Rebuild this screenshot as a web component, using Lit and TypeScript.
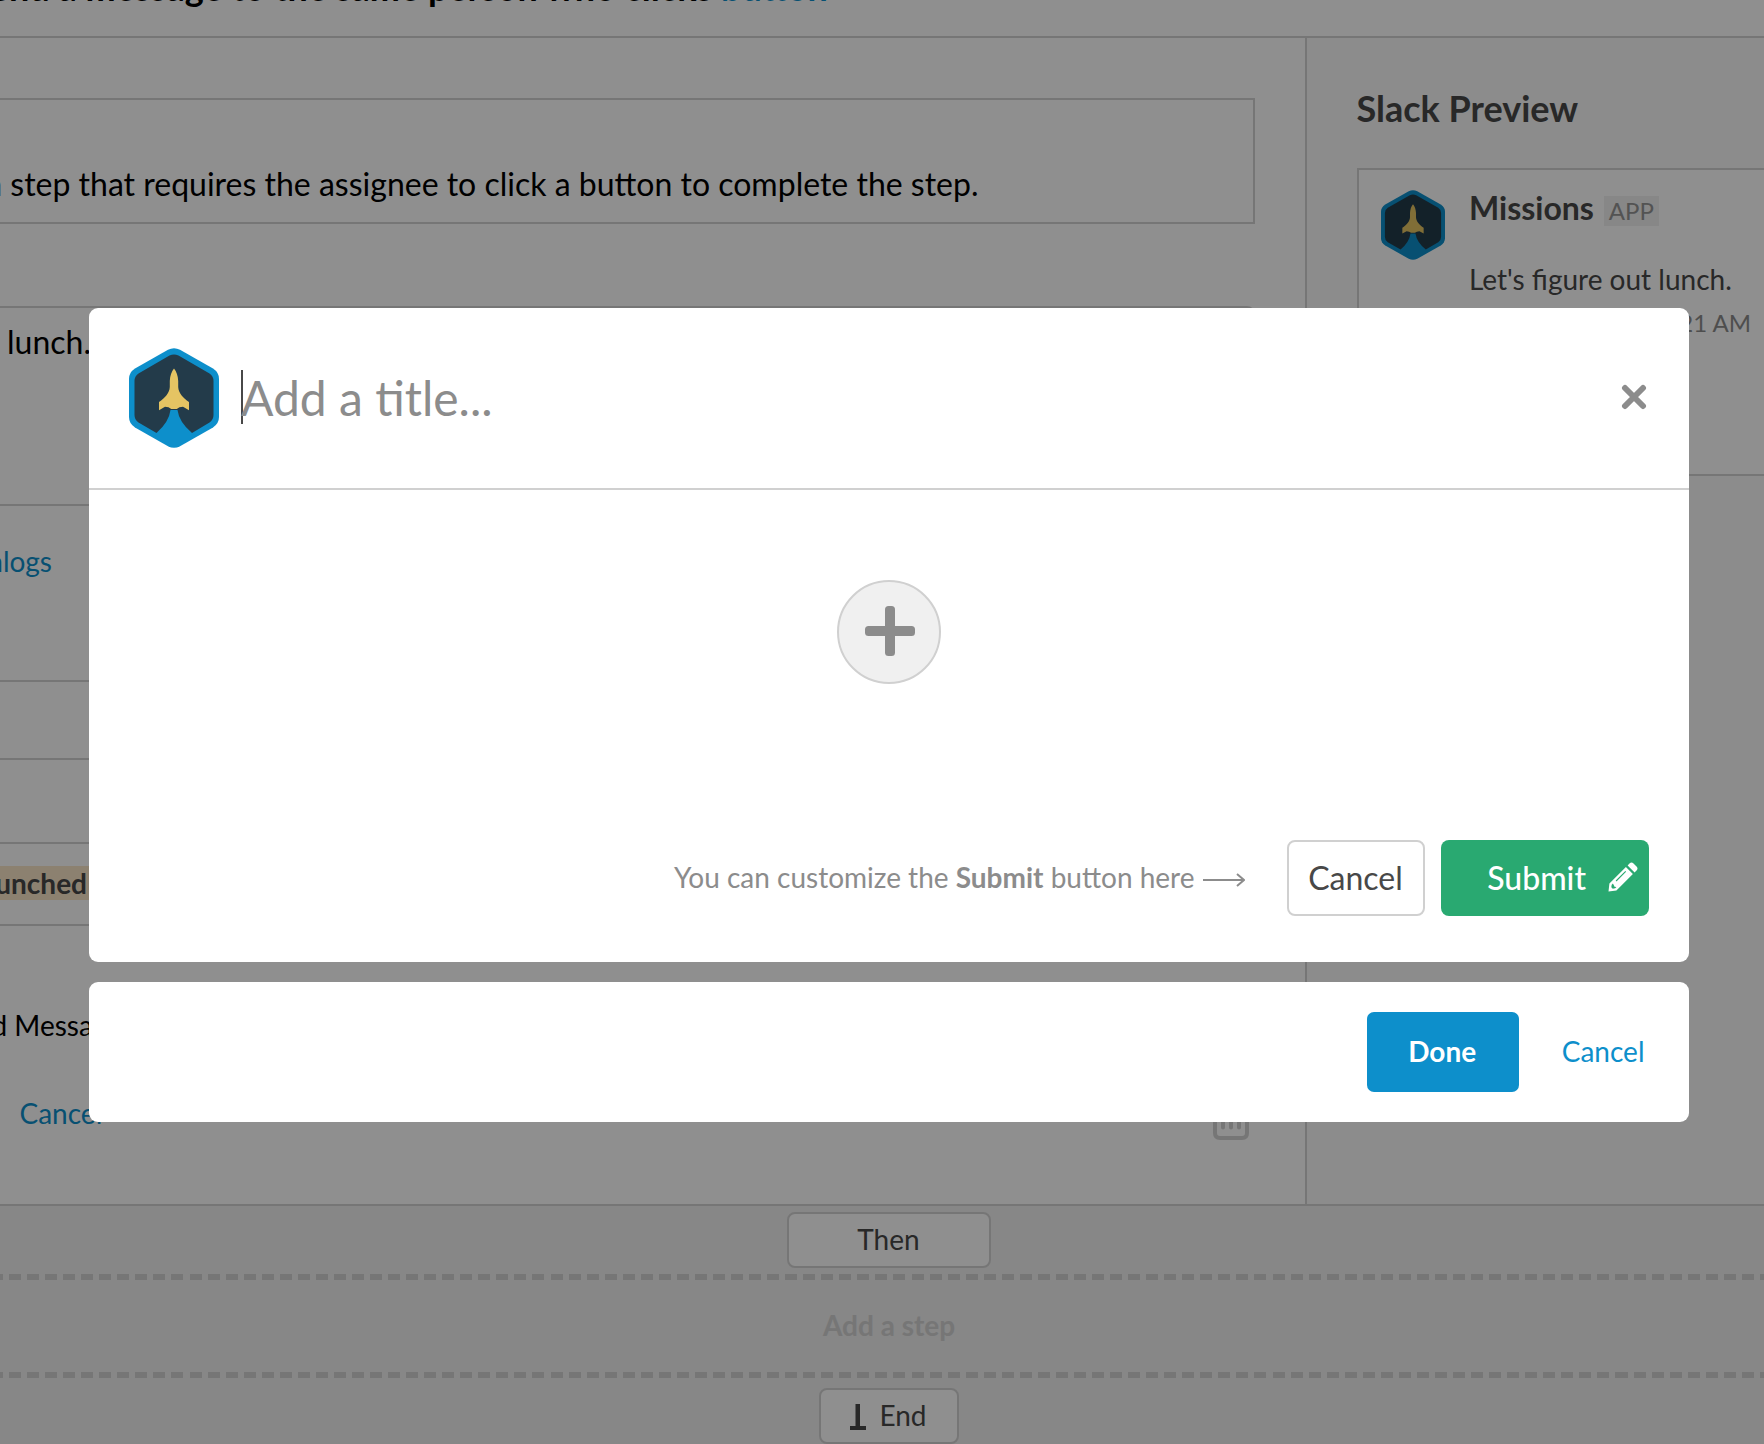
import { LitElement, html, css } from "lit";
import { customElement } from "lit/decorators.js";

@customElement("mission-logo")
class MissionLogo extends LitElement {
  static styles = css`
    :host { display: block; }
    svg { display: block; width: 100%; height: 100%; }
  `;
  render() {
    return html`<svg viewBox="0 0 90 100" preserveAspectRatio="none">
      <path d="M39 1.8Q45-1.2 51 1.8L84 20.6Q90 24.5 90 31V69Q90 75.500 84 79.400L51 98.200Q45 101.200 39 98.200L6 79.400Q0 75.500 0 69V31Q0 24.500 6 20.600Z" fill="#0d8fcb"/>
      <path d="M40.500 7.600Q45 5.200 49.500 7.600L80.500 25.500Q84.500 28.200 84.500 33V67Q84.500 72 80.500 74.500L63 85Q50 74 48.500 62H41.500Q40 74 27.500 85L9.500 74.500Q5.500 72 5.500 67V33Q5.500 28.200 9.500 25.500Z" fill="#233b4a"/>
      <path d="M45 20.500C47.500 23.500 49 28 49.200 33V39C49.500 45 54 50 60 54V62.200L54 58.800Q50 58.800 47.800 61H42.200Q40 58.800 36 58.800L30 62.200V54C36 50 40.500 45 40.800 39V33C41 28 42.500 23.500 45 20.500Z" fill="#e5c463"/>
    </svg>`;
  }
}

@customElement("step-editor")
class StepEditor extends LitElement {
  static styles = css`
    :host { display: flex; flex-direction: column; box-sizing: border-box; border-right: 2px solid #d3d3d3; width: 1307px; height: 1166px; font-size: 28px; color: #000; }
    .box { box-sizing: border-box; width: 1255px; border: 2px solid #d3d3d3; border-left: 0; flex: none; }
    .line { display: flex; justify-content: flex-end; white-space: nowrap; flex: none; }
    .intro { margin-top: 60px; height: 126px; padding-top: 60px; }
    .intro .line { width: 978.5px; font-size: 32px; line-height: 48px; }
    .message { margin-top: 82px; height: 200px; border-radius: 0 8px 8px 0; padding-top: 11px; }
    .message .line { width: 91px; font-size: 32px; line-height: 46px; }
    .link { color: #0d8fcb; }
    .dialogs { width: 52px; line-height: 34px; margin-top: 38px; }
    .field { margin-top: 102px; height: 80px; }
    .who { margin-top: 82px; height: 84px; padding-top: 22px; }
    .who .line { width: 87px; }
    .who b { background: #fae6c8; line-height: 34px; color: #484848; padding-right: 6px; margin-right: -6px; }
    .send { width: 122px; line-height: 34px; margin-top: 82px; }
    .actions { display: flex; align-items: flex-start; justify-content: space-between; width: 1250px; margin-top: 46px; }
    .actions span { padding-left: 19.5px; line-height: 50px; }
    .actions svg { width: 38px; height: 44px; margin-top: 10px; }
  `;
  render() {
    return html`
      <div class="box intro"><div class="line">Create a step that requires the assignee to click a button to complete the step.</div></div>
      <div class="box message"><div class="line">Let's figure out lunch.</div></div>
      <div class="line dialogs link">Learn about dialogs</div>
      <div class="box field"></div>
      <div class="box who"><div class="line"><b>Person who launched</b></div></div>
      <div class="line send">Send Message</div>
      <div class="actions"><span class="link">Cancel</span>
        <svg viewBox="0 0 38 44" fill="none" stroke="#d3d3d3" stroke-linecap="round">
          <path stroke-width="4" d="M3 8V35Q3 40 8 40H30Q35 40 35 35V8M1 8H37M12 8V3H26V8"/>
          <path stroke-width="4" d="M11 17V29.500M19 17V29.500M27 17V29.500"/>
        </svg>
      </div>`;
  }
}

@customElement("slack-preview")
class SlackPreview extends LitElement {
  static styles = css`
    :host { display: block; flex: 1; padding: 46px 0 0 50px; background: #f9f9f9; color: #484848; overflow: hidden; }
    h2 { margin: 0 0 0 -0.5px; font-size: 36px; line-height: 48px; height: 84px; white-space: nowrap; }
    .card { box-sizing: border-box; width: 460px; height: 308px; border: 2px solid #d3d3d3; background: #fff; display: flex; gap: 24px; padding: 20px 0 0 22px; }
    mission-logo { width: 64px; height: 70px; flex: none; }
    .who { display: flex; align-items: center; gap: 10px; font-size: 32px; line-height: 40px; font-weight: 700; height: 40px; margin-top: -2px; white-space: nowrap; }
    .tag { font-size: 24px; font-weight: 400; line-height: 30px; height: 30px; width: 55px; text-align: center; color: #949494; background: #f0f0f0; margin-top: 5px; }
    .text { margin-top: 34px; font-size: 28px; line-height: 34px; white-space: nowrap; }
    .time { margin-top: 12px; width: 282px; display: flex; justify-content: flex-end; font-size: 24px; line-height: 30px; color: #8c8c8c; white-space: nowrap; }
  `;
  render() {
    return html`<h2>Slack Preview</h2>
      <div class="card"><mission-logo></mission-logo>
        <div class="body">
          <div class="who">Missions<span class="tag">APP</span></div>
          <div class="text">Let's figure out lunch.</div>
          <div class="time">Nov 17th, 2017 at 11:21 AM</div>
        </div>
      </div>`;
  }
}

@customElement("dialog-builder")
class DialogBuilder extends LitElement {
  static styles = css`
    :host { display: flex; flex-direction: column; gap: 20px; width: 1600px; font-size: 28px; }
    .panel { background: #fff; border-radius: 9px; box-sizing: border-box; }
    .builder { height: 654px; display: flex; flex-direction: column; }
    .head { height: 182px; box-sizing: border-box; border-bottom: 2px solid #d0d0d0; display: flex; align-items: center; padding: 0 42px 0 40px; flex: none; }
    mission-logo { width: 90px; height: 100px; margin-bottom: 1px; }
    .caret { width: 2px; height: 54px; background: #484848; margin: 0 -2px 2px 22px; }
    .title { flex: 1; font-size: 48px; line-height: 60px; color: #8c8c8c; margin-bottom: 1px; }
    .close { width: 26px; height: 26px; margin-bottom: 2px; }
    .body { flex: 1; display: flex; justify-content: center; padding-top: 90px; }
    .add { width: 104px; height: 104px; box-sizing: border-box; border: 2px solid #d0d0d0; border-radius: 50%; background: #f0f0f0; display: grid; place-items: center; }
    .add svg { width: 52px; height: 52px; margin: -2px 0 0 1px; }
    .foot { display: flex; align-items: center; justify-content: flex-end; height: 76px; padding: 0 40px 46px 0; flex: none; }
    .hint { color: #8c8c8c; white-space: nowrap; margin-top: -2px; }
    .arrow { width: 42px; height: 16px; margin: 4px 42px 0 8.5px; }
    .btn { box-sizing: border-box; height: 76px; border-radius: 8px; font-size: 32px; display: flex; align-items: center; justify-content: center; padding-bottom: 2px; }
    .cancel { width: 138px; border: 2px solid #d0d0d0; color: #484848; padding-right: 1px; }
    .submit { width: 208px; margin-left: 16px; background: #29a971; color: #fff; font-weight: 500; justify-content: flex-end; padding-right: 10px; gap: 21px; }
    .submit svg { width: 32px; height: 32px; }
    .bar { height: 140px; display: flex; align-items: center; justify-content: flex-end; padding-right: 44.5px; }
    .done { box-sizing: border-box; width: 152px; height: 80px; padding: 0 2px 2px 0; border-radius: 7px; background: #0d8fcb; color: #fff; font-weight: 700; display: grid; place-items: center; }
    .link { color: #0d8fcb; margin: -2px 0 0 42.5px; }
  `;
  render() {
    return html`
      <section class="panel builder">
        <div class="head">
          <mission-logo></mission-logo><span class="caret"></span><span class="title">Add a title...</span>
          <svg class="close" viewBox="0 0 26 26" stroke="#8c8c8c" stroke-width="6" stroke-linecap="round"><path d="M4 4L22 22M22 4L4 22"/></svg>
        </div>
        <div class="body"><div class="add"><svg viewBox="0 0 52 52" fill="#8c8c8c"><rect x="1" y="21" width="50" height="10" rx="3.500"/><rect x="21" y="1" width="10" height="50" rx="3.500"/></svg></div></div>
        <div class="foot">
          <span class="hint">You can customize the <b>Submit</b> button here</span>
          <svg class="arrow" viewBox="0 0 42 16" fill="none" stroke="#8c8c8c" stroke-width="2"><path d="M0 8H41M34 2L41 8L34 14"/></svg>
          <span class="btn cancel">Cancel</span>
          <span class="btn submit">Submit
            <svg viewBox="0 0 32 32" fill="#fff"><path d="M22.500 2.500Q24.500 .5 26.500 2.500L29.500 5.500Q31.500 7.500 29.500 9.500L27.600 11.400L20.600 4.400Z"/><path fill-rule="evenodd" d="M18.900 6.100L25.900 13.100L9.400 29.600L1.500 30.500L2.400 22.600ZM4.700 23.800L4.300 26.200L5.800 27.700L8.200 27.300L9.400 26.100L7.500 25.800L7 24.500L5.900 22.600ZM18.300 10L8.700 19.600L9.500 20.400L19.100 10.800Z"/></svg>
          </span>
        </div>
      </section>
      <section class="panel bar"><span class="done">Done</span><span class="link">Cancel</span></section>`;
  }
}

@customElement("app-root")
class AppRoot extends LitElement {
  static styles = css`
    :host { display: block; position: relative; width: 1764px; height: 1444px; overflow: hidden; background: #fff; font-family: Lato, "Liberation Sans", sans-serif; }
    .heading { box-sizing: border-box; height: 38px; border-bottom: 2px solid #d3d3d3; overflow: hidden; }
    .heading div { margin: -33px 0 0 -30px; transform: translateY(-0.5px); font-size: 36px; line-height: 40px; font-weight: 700; white-space: nowrap; }
    .heading span { color: #0d8fcb; }
    .main { display: flex; height: 1166px; }
    .flow { box-sizing: border-box; border-top: 2px solid #d3d3d3; background: #f0f0f0; height: 240px; display: flex; flex-direction: column; align-items: center; font-size: 28px; color: #484848; }
    .node { box-sizing: border-box; height: 56px; border: 2px solid #d3d3d3; border-radius: 8px; background: #fff; display: flex; align-items: center; justify-content: center; flex: none; padding-bottom: 2px; }
    .then { width: 204px; margin: 6px 0 6px 13px; }
    .end { width: 140px; margin: 10px 0 0 13px; gap: 13px; }
    .end svg { width: 16px; height: 26px; margin-top: 4px; }
    .dash { width: 100%; height: 6px; flex: none; background: repeating-linear-gradient(90deg, #d3d3d3 0 12px, transparent 12px 18.050px) -9px 0 / 1800px 6px; }
    .add { box-sizing: border-box; height: 92px; display: flex; align-items: center; font-weight: 700; color: #d3d3d3; padding: 0 0 2px 14px; }
    .overlay { position: absolute; inset: 0; background: rgba(0, 0, 0, .44); display: flex; align-items: flex-start; padding: 308px 0 0 89px; }
  `;
  render() {
    return html`
      <div class="heading"><div>Send a message to the same person who clicks <span>button</span></div></div>
      <div class="main"><step-editor></step-editor><slack-preview></slack-preview></div>
      <div class="flow">
        <div class="node then">Then</div>
        <div class="dash"></div>
        <div class="add">Add a step</div>
        <div class="dash"></div>
        <div class="node end"><svg viewBox="0 0 16 26" fill="#484848"><path d="M5.500 0H10V22H16V26H0V22H5.500Z"/></svg>End</div>
      </div>
      <div class="overlay"><dialog-builder></dialog-builder></div>`;
  }
}
